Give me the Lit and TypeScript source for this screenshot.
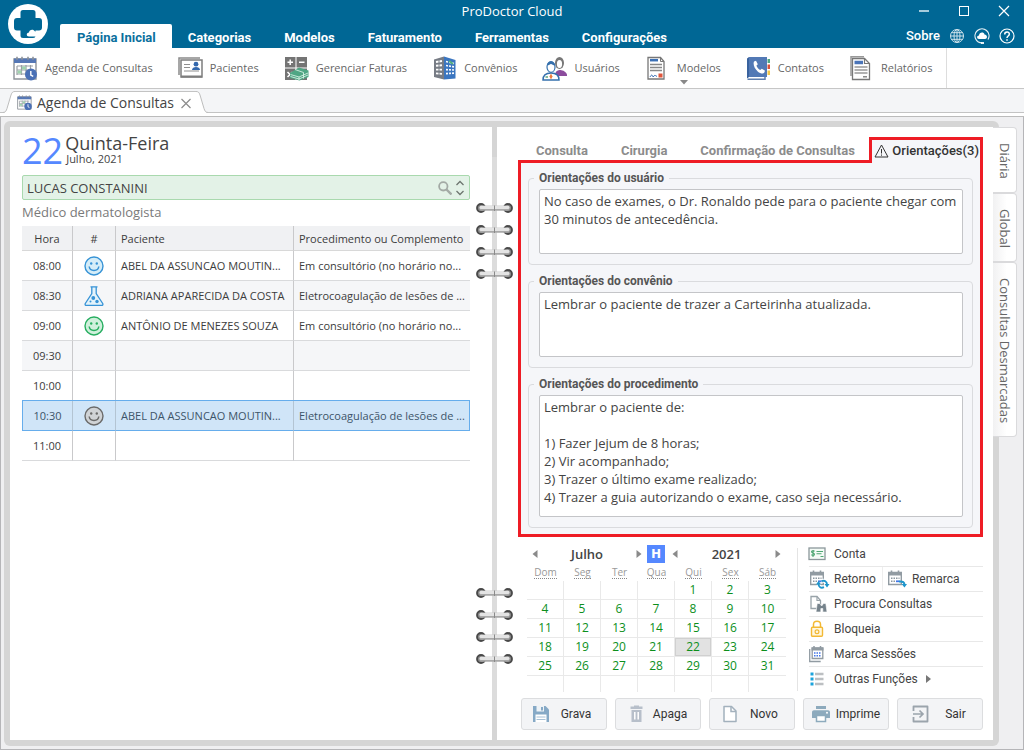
import { LitElement, html, css, svg, nothing, TemplateResult } from "lit";
import { customElement, state } from "lit/decorators.js";
import { classMap } from "lit/directives/class-map.js";

const gridIcon = (c: string) => svg`
  <path d="M1 3h22v20H1z" fill="#fff" stroke="${c}" stroke-width="1.4"/>
  <path d="M1 2.500h22v4.500H1z" fill="#5577b5"/>
  <path d="M4 .8v3M9 .8v3M15 .8v3M20 .8v3" stroke="#8d9299" stroke-width="1.600"/>
  <path d="M4 10h16M4 14h16M4 18h10M4 10v9M8.500 9v10M13 9v10M17.500 9v6" stroke="#9a9fa5" stroke-width="1.200"/>`;

const clock = svg`
  <circle cx="18" cy="18.500" r="6" fill="#4a70b5"/>
  <path d="M17.800 15v4l2.400 1.400" fill="none" stroke="#fff" stroke-width="1.400"/>`;

const ribbonIcons: Record<string, TemplateResult> = {
  agenda: svg`${gridIcon("#8d9299")}<path d="M9 10.500h4v3H9zM4.500 14.500h4v3h-4z" fill="#9fd4ae"/>${clock}`,
  pacientes: svg`
    <path d="M1 19V2h21" fill="none" stroke="#8a8a8a" stroke-width="1.500"/>
    <rect x="3" y="4" width="21" height="17" fill="#fff" stroke="#7d7d7d" stroke-width="1.500"/>
    <path d="M3 20.500h21" stroke="#7d7d7d" stroke-width="2"/>
    <path d="M6 8.500h6M6 11.500h6M6 15h15" stroke="#8f8f8f" stroke-width="1.200"/>
    <circle cx="18" cy="8.200" r="2.400" fill="#3468ad"/><path d="M14 14c0-4 8-4 8 0z" fill="#3468ad"/>`,
  faturas: svg`
    <path d="M1 1h10.500v10.500H1zM12.500 1H23v10.500H12.500zM1 12.500h10.500V24H1zM12.500 12.500H23V24H12.500z" fill="#747474"/>
    <path d="M3.500 6.200H9M6.200 3.500V9M15 6.200h5.500M3.500 16l5 5M8.500 16l-5 5" stroke="#fff" stroke-width="1.500"/>
    <path d="M6 17l9-5.500 9.500 3V21l-9 3.500L6 22z" fill="#4fa684"/>
    <path d="M6.500 18.500l8.500 2.500 9-4M6.500 20.500l8.500 2.500 9-4M15 21v3M11 13.500l8.500 3v6" fill="none" stroke="#d5efe3" stroke-width=".9"/>`,
  convenios: svg`
    <path d="M2 3.500L12 .5v23L2 21z" fill="#777c85"/><path d="M12 .5L23.500 4v18.500L12 23.500z" fill="#3b76c0"/>
    <path d="M4 6l6-1M4 9.800l6-.6M4 13.600h6M4 17.400l6 .5" stroke="#fff" stroke-width="1.900"/>
    <path d="M7 4v15" stroke="#777c85" stroke-width="1"/>
    <path d="M14 5.500l8 2M14 9.500l8 1.300M14 13.600l8 .4M14 17.700l8-.6" stroke="#fff" stroke-width="1.700"/>
    <path d="M16.500 3v19M19.500 4v18" stroke="#3b76c0" stroke-width="1.100"/>
    <path d="M17 5l4 3" stroke="#55b07f" stroke-width="2"/>`,
  usuarios: svg`
    <path d="M12.500 20c.5-4 2.500-6 5-6s7 1 8 6z" fill="#8c4c9d"/>
    <ellipse cx="17.500" cy="7" rx="4.500" ry="6" fill="#777"/><ellipse cx="17.500" cy="8" rx="2.600" ry="4" fill="#fff"/>
    <path d="M1 24c0-5 3-7 8-7s8 2 8 7z" fill="#fff" stroke="#3570ad" stroke-width="1.500"/>
    <ellipse cx="9" cy="11" rx="4" ry="5.300" fill="#fff" stroke="#3570ad" stroke-width="1.200"/>
    <path d="M5 9.500C5 4 13 4 13 9.500c-2 0-3-1.500-4-1.500s-2 1.500-4 1.500z" fill="#3570ad"/>
    <path d="M9 17.500l1.500 3L9 23.500l-1.500-3z" fill="#ee7b3a"/><path d="M3.500 21h2.500" stroke="#5ba782" stroke-width="1.500"/>`,
  modelos: svg`
    <path d="M3 1.500h12.500l3.500 4V23H3z" fill="#fff" stroke="#777" stroke-width="1.300"/><path d="M15.500 1.500v4H19" fill="none" stroke="#777"/>
    <path d="M5 4.200h8" stroke="#3b70b5" stroke-width="2.500"/>
    <path d="M5 8.500h12M5 11.500h12M5 14.500h12" stroke="#888" stroke-width="1.300"/>
    <path d="M5 21c1.500-3 2.500-2 3 0 1.500-2 2-2 4-.5" fill="none" stroke="#3b70b5"/>
    <rect x="13.500" y="17.500" width="4" height="4" fill="#e0563c"/>`,
  contatos: svg`
    <path d="M3 1h18v20H3z" fill="#5279b5"/><path d="M3 1L1 2.500V22.500L3 21" fill="#39629e"/>
    <path d="M1.500 23.300H19V21" fill="none" stroke="#5f7fae" stroke-width="1.500"/>
    <path d="M21.500 3H24v4h-2.500z" fill="#4fa684"/><path d="M21.500 8.500H24v4.500h-2.500z" fill="#d8523a"/><path d="M21.500 14.500H24V19h-2.500z" fill="#f3c648"/>
    <path d="M8 5.500l2-.8 1.800 3.600-1.400 1.500c.8 2 2 3.300 3.800 4.200l1.600-1.300 3.200 2-.8 2c-1 1.300-3.700 1-6.500-1.300C8.500 12.800 6.800 8.500 8 5.500z" fill="#fff"/>`,
  relatorios: svg`
    <path d="M2 20V.7h13" fill="none" stroke="#999" stroke-width="1.500"/>
    <path d="M3.500 2.500h12l5 5v16h-17z" fill="#fff" stroke="#777" stroke-width="1.300"/><path d="M15.500 2.500v5h5" fill="none" stroke="#777" stroke-width="1.200"/>
    <path d="M5.500 6.500h8.500" stroke="#4a74b8" stroke-width="3.500"/>
    <path d="M5.500 11h13M5.500 14h13M5.500 17h13" stroke="#999" stroke-width="1.300"/><path d="M14 20.800h4" stroke="#777" stroke-width="1.300"/>`,
};

const smallCalendar = svg`
  <path d="M1.700 2.500h12.600v12H1.700z" fill="#fff" stroke="#919ba2" stroke-width="1.400"/>
  <path d="M1 2h14v3.500H1z" fill="#919ba2"/><path d="M4.500 .5v2M11.500 .5v2" stroke="#919ba2" stroke-width="1.600"/>
  <path d="M4 8.300h8.500M4 11.300h5" stroke="#8c98a0" stroke-width="1.500" stroke-dasharray="1.500 1"/>
  <path d="M9 11.300h3.500" stroke="#4176e8" stroke-width="1.800"/>`;

const actionIcons: Record<string, TemplateResult> = {
  conta: svg`
    <rect x="0" y="3" width="16" height="11.500" fill="#f4fbf6" stroke="#8c979b" stroke-width="1.300"/>
    <path d="M5.500 6.300c-1-1-3-.8-3 .5s3 1.100 3 2.500-2.200 1.500-3.100.4M4 5v7M7.500 6.500h6.500M7.500 8.700h5M11.500 11.500h3" fill="none" stroke="#4fa774" stroke-width="1.100"/>`,
  retorno: svg`${smallCalendar}
    <path d="M9.500 14.500c.2 2.500 2.500 3.800 5 2.800M17.800 14c-.1-2.500-2.200-3.800-4.600-3" fill="none" stroke="#fff" stroke-width="4"/>
    <path d="M9.500 14c0 3 2.500 4.500 5.500 3.200M18 14.500c0-3-2.500-4.500-5.500-3.300" fill="none" stroke="#1e95cb" stroke-width="1.900"/>
    <path d="M7 14.500h5L9.500 11zM15.500 14h5L18 17.500z" fill="#1e95cb"/>`,
  remarca: svg`${smallCalendar}
    <path d="M12 11.500c4-.5 5.500 1 5.500 3.500" fill="none" stroke="#1e95cb" stroke-width="2"/><path d="M14.500 14h5.500l-2.500 3.500z" fill="#1e95cb"/>`,
  procura: svg`
    <path d="M2 1.500h6l3.500 4V13.500H2z" fill="#fff" stroke="#99a3a9" stroke-width="1.300"/><path d="M8 1.500v4h3.500" fill="none" stroke="#99a3a9" stroke-width="1.200"/>
    <path d="M8.200 8.500h2.600l1.200 2h1.200l1.200-2h2.400L18 17h-4.200v-3.500h-2V17H7z" fill="#75828b" stroke="#fff" stroke-width=".6"/>`,
  bloqueia: svg`
    <path d="M4.500 7.500V4.500c0-4.200 7-4.200 7 0v3" fill="none" stroke="#f3b934" stroke-width="1.500"/>
    <rect x="2.500" y="7.300" width="11" height="9" rx="1" fill="#fff7df" stroke="#f3b934" stroke-width="1.400"/><circle cx="8" cy="11.800" r="1.900" fill="none" stroke="#f3b934" stroke-width="1.200"/>`,
  marca: svg`
    <path d="M.7 4v12.500h11" fill="none" stroke="#919ba2" stroke-width="1.300"/>
    <path d="M3.200 3h10.600v10.500H3.200z" fill="#fff" stroke="#919ba2" stroke-width="1.300"/>
    <path d="M2.500 2.500h12v3h-12z" fill="#919ba2"/><path d="M5 1v2M11.500 1v2" stroke="#919ba2" stroke-width="1.500"/>
    <path d="M5 8h7.500M5 10.800h7.500" stroke="#4176e8" stroke-width="1.500" stroke-dasharray="1.500 1"/>`,
  outras: svg`
    <path d="M1.500 4h3M1.500 9h3M1.500 14h3" stroke="#1ca3dc" stroke-width="2.800"/><path d="M6 4h8.500M6 9h8.500M6 14h8.500" stroke="#bcbfc2" stroke-width="2.400"/>`,
};

const footerIcons: Record<string, TemplateResult> = {
  grava: svg`
    <path d="M2 2h12.500L18 5.500V18H2z" fill="#86a9c6"/><path d="M5.500 2h7.500v5.500H5.500z" fill="#eef3f7"/><path d="M10 3h2v3.500h-2z" fill="#86a9c6"/>
    <path d="M4.500 10.500h11V18h-11z" fill="#fff"/><path d="M5.500 13h9M5.500 15.500h9" stroke="#a7c0d5"/>`,
  apaga: svg`
    <path d="M6.500 6h10v12h-10z" fill="#b7bfca"/><path d="M5.500 2.500h12v2.400h-12zM9 1.500h5v2H9z" fill="#b7bfca"/><path d="M9.800 8v7.500M13.200 8v7.500" stroke="#fff" stroke-width="1.500"/>`,
  novo: svg`
    <path d="M5 2.500h7.500L17 7v10.500H5z" fill="#fff" stroke="#a3b1bd" stroke-width="1.500" stroke-linejoin="round"/><path d="M12 2.500V7.500h5" fill="none" stroke="#a3b1bd" stroke-width="1.500"/>`,
  imprime: svg`
    <path d="M3 2h10v3H3z" fill="#8daabd"/><path d="M-1 8.500c0-1.500.8-2.300 2-2.300h14c1.200 0 2 .8 2 2.300V14H-1z" fill="#8daabd"/>
    <path d="M3.500 11.500h9v6h-9z" fill="#fff" stroke="#8daabd" stroke-width="1.500"/><circle cx="14" cy="8.800" r="1" fill="#fff"/>`,
  sair: svg`
    <path d="M6.500 7V2.500h14v15h-14V13" fill="none" stroke="#9ba4ac" stroke-width="1.800" stroke-linejoin="round"/>
    <path d="M6 10h10M12.500 6.500l3.500 3.500-3.500 3.500" fill="none" stroke="#9ba4ac" stroke-width="1.700"/>`,
};

const smiley = (line: string, fill: string) => svg`
  <circle cx="10" cy="10" r="9" fill="${fill}" stroke="${line}" stroke-width="1.400"/>
  <circle cx="7.200" cy="7.500" r="1.200" fill="${line}"/><circle cx="12.800" cy="7.500" r="1.200" fill="${line}"/>
  <path d="M5.200 10.500c.6 5.200 9 5.200 9.600 0" fill="none" stroke="${line}" stroke-width="1.500"/>`;

const statusIcons: Record<string, TemplateResult> = {
  blue: smiley("#3793d6", "#d5edf8"),
  green: smiley("#27ae60", "#d0f0dc"),
  grey: smiley("#6a6a6a", "#d0d3d6"),
  flask: svg`
    <path d="M6.500 .8h7M7.800 1v6.500L1.300 17.500c-.5 1 0 2 1 2h15.400c1 0 1.500-1 1-2L12.200 7.500V1" fill="#e3f3fb" stroke="#3793d6" stroke-width="1.300"/>
    <circle cx="9.300" cy="12" r="1.900" fill="#3793d6"/><circle cx="13" cy="15.500" r="1.700" fill="#3793d6"/><circle cx="6.500" cy="15.500" r="1" fill="#3793d6"/>`,
};

interface Slot { time: string; icon?: string; patient?: string; procedure?: string; selected?: boolean; }

const slots: Slot[] = [
  { time: "08:00", icon: "blue", patient: "ABEL DA ASSUNCAO MOUTIN...", procedure: "Em consultório (no horário no..." },
  { time: "08:30", icon: "flask", patient: "ADRIANA APARECIDA DA COSTA", procedure: "Eletrocoagulação de lesões de ..." },
  { time: "09:00", icon: "green", patient: "ANTÔNIO DE MENEZES SOUZA", procedure: "Em consultório (no horário no..." },
  { time: "09:30" },
  { time: "10:00" },
  { time: "10:30", icon: "grey", patient: "ABEL DA ASSUNCAO MOUTIN...", procedure: "Eletrocoagulação de lesões de ...", selected: true },
  { time: "11:00" },
];

const guidance = [
  { id: "user", title: "Orientações do usuário", tall: false,
    text: "No caso de exames, o Dr. Ronaldo pede para o paciente chegar com 30 minutos de antecedência." },
  { id: "plan", title: "Orientações do convênio", tall: false,
    text: "Lembrar o paciente de trazer a Carteirinha atualizada." },
  { id: "proc", title: "Orientações do procedimento", tall: true,
    text: "Lembrar o paciente de:\n\n1) Fazer Jejum de 8 horas;\n2) Vir acompanhado;\n3) Trazer o último exame realizado;\n4) Trazer a guia autorizando o exame, caso seja necessário." },
];

const reset = css`
  :host, *, *::before, *::after { box-sizing: border-box; }
  button, select, textarea { font: inherit; color: inherit; margin: 0; }
  button { border: 0; background: none; padding: 0; cursor: pointer; }
  svg { display: block; flex: none; }
`;

@customElement("app-header")
class AppHeader extends LitElement {
  static styles = [reset, css`
    :host { display: block; font-family: "Open Sans", sans-serif; }
    .bar { display: grid; grid-template-columns: 60px 1fr auto; grid-template-rows: 24px 24px; background: #006795; color: #fff; }
    .logo { grid-column: 1; grid-row: 1 / 3; margin: 4px 0 0 8px; }
    .title { grid-column: 1 / 4; grid-row: 1; justify-self: center; font-size: 13px; line-height: 22px; }
    .window { grid-column: 3; grid-row: 1; display: flex; align-items: center; justify-content: flex-end; gap: 24px; padding-right: 12px; }
    .menu { grid-column: 2; grid-row: 2; display: flex; }
    .menu-item { padding: 3px 17px 0 16px; font: 700 13px/21px Roboto, sans-serif; color: #fff; }
    .menu-item.on { padding: 3px 16px 0 17px; background: #fff; color: #0a6f9d; border-radius: 2px 2px 0 0; }
    .help { grid-column: 3; grid-row: 2; display: flex; align-items: center; gap: 9px; padding-right: 9px; }
    .about { font: 500 13px/24px Roboto, sans-serif; color: #fff; text-decoration: none; }
    .ribbon { display: flex; height: 41px; background: #fff; border-bottom: 1px solid #c6c6c6; }
    .tools { display: flex; gap: 24px; padding: 0 14px 0 12px; border-right: 1px solid #ddd; }
    .tool { position: relative; display: flex; align-items: center; gap: 7px; font-size: 11px; color: #666; }
    .caption { padding-bottom: 2px; }
    .more { position: absolute; left: 36px; bottom: 3px; }
  `];
  private menu = ["Página Inicial", "Categorias", "Modelos", "Faturamento", "Ferramentas", "Configurações"];
  private tools = [
    ["agenda", "Agenda de Consultas"], ["pacientes", "Pacientes"], ["faturas", "Gerenciar Faturas"], ["convenios", "Convênios"],
    ["usuarios", "Usuários"], ["modelos", "Modelos"], ["contatos", "Contatos"], ["relatorios", "Relatórios"],
  ];
  render() {
    return html`
      <header class="bar">
        <svg class="logo" width="40" height="40" viewBox="0 0 40 40" aria-hidden="true">
          <circle cx="20" cy="20" r="20" fill="#fff"/>
          <path d="M15 6h10q2.500 0 2.500 2.500V14H31q3 0 3 3v6.500q0 3-3 3H27.500V31.500Q27.500 34 25 34H15q-2.500 0-2.500-2.500v-5H9q-3 0-3-3V17q0-3 3-3h3.500V8.500Q12.500 6 15 6z" fill="#006795"/>
          <path d="M21 32.500c-3 0-3-4 0-4 0-3 4.500-4 6-1 2-.5 3 1 3 2.200 2.500.3 2.500 2.800 0 2.800z" fill="#fff"/>
        </svg>
        <div class="title">ProDoctor Cloud</div>
        <div class="window">
          <button aria-label="Minimizar"><svg width="16" height="16" viewBox="0 0 16 16"><path d="M3 7h10" stroke="#a5cbdc" stroke-width="2"/></svg></button>
          <button aria-label="Maximizar"><svg width="16" height="16" viewBox="0 0 16 16"><rect x="3.500" y="2.500" width="9" height="9" fill="none" stroke="#fff"/></svg></button>
          <button aria-label="Fechar"><svg width="16" height="16" viewBox="0 0 16 16"><path d="M3 2l10 10M13 2L3 12" stroke="#fff" stroke-width="1.200"/></svg></button>
        </div>
        <nav class="menu">
          ${this.menu.map((m, i) => html`<button class=${classMap({ "menu-item": true, on: i === 0 })}>${m}</button>`)}
        </nav>
        <div class="help">
          <a class="about" href="#sobre">Sobre</a>
          <button aria-label="Idioma"><svg width="16" height="16" viewBox="0 0 16 16" fill="none" stroke="#cfe3ec">
            <circle cx="8" cy="8" r="6.500"/><ellipse cx="8" cy="8" rx="3" ry="6.500"/><path d="M8 1.500v13M1.500 8h13M2.500 4.700h11M2.500 11.300h11"/></svg></button>
          <button aria-label="Suporte"><svg width="16" height="16" viewBox="0 0 16 16">
            <path d="M2 11.500A7 7 0 1 1 14 11.500M2 11.500c1 2 3 3.300 6 3.300" fill="none" stroke="#e6f1f6" stroke-width="1.200"/>
            <path d="M5 11c-2.500 0-2.500-3.500 0-3.500C5 4 10 3.500 10.500 6.500c3 0 3.500 4.500.5 4.500z" fill="#fff"/><path d="M7 15h3" stroke="#fff" stroke-width="1.800"/></svg></button>
          <button aria-label="Ajuda"><svg width="16" height="16" viewBox="0 0 16 16" fill="none" stroke="#fff">
            <circle cx="8" cy="8" r="7" stroke-width="1.200"/><path d="M5.700 6.500C5.700 3 10.500 3.300 10.300 6.200 10.200 8 8 8 8 10M8 11.200v1.600" stroke-width="1.500"/></svg></button>
        </div>
      </header>
      <div class="ribbon">
        <div class="tools">
          ${this.tools.map(([icon, label]) => html`
            <button class="tool">
              <svg width="26" height="26" viewBox="-1 -1 26 26" aria-hidden="true">${ribbonIcons[icon]}</svg><span class="caption">${label}</span>
              ${icon === "modelos" ? html`<svg class="more" width="8" height="5" viewBox="0 0 8 5"><path d="M0 0h8L4 4.500z" fill="#888"/></svg>` : nothing}
            </button>`)}
        </div>
      </div>`;
  }
}

@customElement("document-tabs")
class DocumentTabs extends LitElement {
  static styles = [reset, css`
    :host { display: block; font-family: "Open Sans", sans-serif; }
    .strip { display: flex; height: 24px; padding: 2px 0 0 3px; background: #f4f5f7; border-bottom: 1px solid #c3c3c3; }
    .tab { display: flex; height: 22px; }
    .label { display: flex; align-items: center; gap: 4px; padding: 0 2px; background: #fff; border-top: 1px solid #c3c3c3; font-size: 14px; line-height: 20px; color: #444; }
    .rule { height: 4px; background: #fff; border-bottom: 1px solid #bbb; }
  `];
  render() {
    return html`
      <div class="strip">
        <div class="tab">
          <svg width="12" height="22" viewBox="0 0 12 22"><path d="M0 22C3 21.500 3 20 4 17.500L8 4C9 1 10 .5 12 .5V22z" fill="#fff"/><path d="M0 21.500C3 21 3 20 4 17.500L8 4C9 1 10 .5 12 .5" fill="none" stroke="#bdbdbd"/></svg>
          <div class="label">
            <svg width="16" height="16" viewBox="0 0 26 26">${ribbonIcons.agenda}</svg>
            <span>Agenda de Consultas</span>
            <button aria-label="Fechar aba"><svg width="16" height="16" viewBox="0 0 16 16"><path d="M3.500 4l9 9M12.500 4l-9 9" stroke="#8c8c8c" stroke-width="1.200"/></svg></button>
          </div>
          <svg width="12" height="22" viewBox="0 0 12 22"><path d="M12 22C9 21.500 9 20 8 17.500L4 4C3 1 2 .5 0 .5V22z" fill="#fff"/><path d="M12 21.500C9 21 9 20 8 17.500L4 4C3 1 2 .5 0 .5" fill="none" stroke="#bdbdbd"/></svg>
        </div>
      </div>
      <div class="rule"></div>`;
  }
}

@customElement("day-page")
class DayPage extends LitElement {
  static styles = [reset, css`
    :host { display: block; padding: 6px 22px 0 12px; background: #fff; font-family: "Open Sans", sans-serif; color: #444; }
    .date { display: flex; gap: 2px; height: 42px; }
    .day { font-size: 36px; line-height: 36px; color: #5588ff; }
    .weekday { font-size: 18px; line-height: 20px; }
    .month { font-size: 11px; line-height: 12px; padding-left: 1px; }
    .doctor { display: flex; align-items: center; height: 25px; padding-right: 4px; background: #e3f2e7; border: 1px solid #a9d9ae; border-radius: 2px; }
    .name { flex: 1; min-width: 0; height: 23px; padding: 0 4px; border: 0; background: none; appearance: none; font-size: 13px; outline: 0; }
    .search { margin-right: 3px; }
    .specialty { font-size: 13px; line-height: 18px; padding: 3px 0; color: #7a7a7a; height: 26px; }
    .agenda { width: 100%; table-layout: fixed; border-collapse: separate; border-spacing: 0; font-size: 11px; color: #3c3c3c; }
    .c-time { width: 51px; }
    .c-icon { width: 43px; }
    .c-patient { width: 178px; }
    .head { height: 25px; padding: 0 5px; background: #f0f1f3; font-weight: 400; text-align: left; border-right: 1px solid #c9c9cb; border-bottom: 1px solid #d8d8d8; white-space: nowrap; }
    .cell { height: 30px; padding: 0 0 0 5px; border-right: 1px solid #c9c9cb; border-bottom: 1px solid #d9dadc; white-space: nowrap; overflow: hidden; text-overflow: ellipsis; }
    .head:last-child, .cell:last-child { border-right: 0; }
    .mid { text-align: center; padding: 0; }
    .mid svg { margin: 0 auto; }
    .row:nth-child(even) .cell { background: #f5f6f8; }
    .row.selected .cell { background: #d0e5f8; border-bottom-color: #66adec; box-shadow: 0 -1px #66adec; color: #3d5468; border-right-color: #b3c4d3; }
    .row.selected .cell:first-child { border-left: 1px solid #66adec; }
    .row.selected .cell:last-child { border-right: 1px solid #66adec; }
  `];
  render() {
    return html`
      <div class="date">
        <div class="day">22</div>
        <div><div class="weekday">Quinta-Feira</div><div class="month">Julho, 2021</div></div>
      </div>
      <div class="doctor">
        <select class="name" aria-label="Médico"><option>LUCAS CONSTANINI</option></select>
        <button class="search" aria-label="Pesquisar"><svg width="14" height="14" viewBox="0 0 14 14" fill="none" stroke="#a3aaa5"><circle cx="5.300" cy="5.300" r="4.200" stroke-width="1.800"/><path d="M8.500 8.500l5 5" stroke-width="2.400"/></svg></button>
        <svg width="10" height="16" viewBox="0 0 10 16" fill="none" stroke="#6d756f" stroke-width="1.300"><path d="M1.500 5L5 1.500 8.500 5M1.500 11L5 14.500 8.500 11"/></svg>
      </div>
      <div class="specialty">Médico dermatologista</div>
      <table class="agenda">
        <colgroup><col class="c-time"><col class="c-icon"><col class="c-patient"><col></colgroup>
        <thead><tr><th class="head mid">Hora</th><th class="head mid">#</th><th class="head">Paciente</th><th class="head">Procedimento ou Complemento</th></tr></thead>
        <tbody>
          ${slots.map(s => html`
            <tr class=${classMap({ row: true, selected: !!s.selected })}>
              <td class="cell mid">${s.time}</td>
              <td class="cell mid">${s.icon ? html`<svg width="20" height="20" viewBox="0 0 20 20">${statusIcons[s.icon]}</svg>` : nothing}</td>
              <td class="cell">${s.patient ?? nothing}</td>
              <td class="cell">${s.procedure ?? nothing}</td>
            </tr>`)}
        </tbody>
      </table>`;
  }
}

@customElement("month-calendar")
class MonthCalendar extends LitElement {
  static styles = [reset, css`
    :host { display: block; width: 259px; font-family: "Open Sans", sans-serif; }
    .top { display: grid; grid-template-columns: 120px 20px 119px; align-items: center; height: 24px; }
    .picker { display: flex; align-items: center; justify-content: space-between; padding: 0 5px; font-size: 13px; font-weight: 600; color: #444; }
    .today { width: 18px; height: 18px; background: #5588ff; color: #fff; font: 900 13px/18px Roboto, sans-serif; }
    .days { width: 100%; table-layout: fixed; border-collapse: separate; border-spacing: 0; text-align: center; }
    .wd { height: 15px; padding: 0; font-size: 10px; line-height: 13px; font-weight: 400; color: #999; vertical-align: top; }
    .abbr { border-bottom: 1px dotted #888; display: inline-block; line-height: 11px; }
    .day { height: 19px; padding: 0; border-right: 1px solid #e9e9e9; border-bottom: 1px solid #e9e9e9; }
    .day:last-child { border-right: 0; }
    .week:last-child .day { border-bottom: 0; height: 16px; }
    .pick { display: block; width: 100%; height: 18px; font-size: 12px; line-height: 18px; color: #0c8f1c; }
    .pick.on { background: #e2e2e2; box-shadow: inset 0 0 0 1px #d0d0d0; }
  `];
  private weekdays = ["Dom", "Seg", "Ter", "Qua", "Qui", "Sex", "Sáb"];
  @state() private selected = 22;
  private arrow(label: string, left: boolean) {
    return html`<button aria-label=${label}><svg width="6" height="8" viewBox="0 0 6 8"><path d=${left ? "M5.500 0v8L.5 4z" : "M.5 0v8L5.500 4z"} fill="#8a8a8a"/></svg></button>`;
  }
  render() {
    const firstColumn = 4;
    return html`
      <div class="top">
        <div class="picker">${this.arrow("Mês anterior", true)}<span>Julho</span>${this.arrow("Próximo mês", false)}</div>
        <button class="today" aria-label="Hoje">H</button>
        <div class="picker">${this.arrow("Ano anterior", true)}<span>2021</span>${this.arrow("Próximo ano", false)}</div>
      </div>
      <table class="days">
        <thead><tr>${this.weekdays.map(d => html`<th class="wd"><span class="abbr">${d}</span></th>`)}</tr></thead>
        <tbody>
          ${[0, 1, 2, 3, 4, 5].map(w => html`<tr class="week">
            ${[0, 1, 2, 3, 4, 5, 6].map(c => {
              const d = w * 7 + c - firstColumn + 1;
              return html`<td class="day">${d > 0 && d < 32
                ? html`<button class=${classMap({ pick: true, on: d === this.selected })} @click=${() => (this.selected = d)}>${d}</button>` : nothing}</td>`;
            })}
          </tr>`)}
        </tbody>
      </table>`;
  }
}

@customElement("guidance-page")
class GuidancePage extends LitElement {
  static styles = [reset, css`
    :host { display: block; padding: 10px 10px 10px 21px; background: #fff; font-family: "Open Sans", sans-serif; color: #444; }
    .tabs { display: flex; height: 23px; padding-left: 18px; font: 700 13px/20px Roboto, sans-serif; color: #8c8c8c; }
    .tab { display: flex; align-items: center; gap: 3px; height: 26px; padding-top: 2px; margin-right: 33px; white-space: nowrap; }
    .tab.wide { margin-right: auto; }
    .tab.on { position: relative; margin-right: 0; padding: 0 1px 2px 2px; font-weight: 500; color: #333; background: #f5f6f9; border: 3px solid #ee1c25; border-bottom: 0; }
    .panel { display: flex; flex-direction: column; gap: 8px; padding: 7px 7px 6px; border: 3px solid #ee1c25; background: #f5f6f9; }
    .group { min-width: 0; margin: 0; padding: 3px 9px 10px 10px; border: 1px solid #dadbde; border-radius: 4px; }
    .legend { padding: 0 5px; margin-left: -5px; font: 700 12px/16px Roboto, sans-serif; color: #555; }
    .text { display: block; width: 100%; height: 65px; padding: 2px 2px 2px 4px; border: 1px solid #c4c5c8; border-radius: 2px; background: #fff; resize: none; outline: 0; font-size: 13px; line-height: 18px; overflow: hidden; }
    .text.tall { height: 122px; }
    .lower { display: flex; gap: 11px; margin: 5px 0 6px 9px; }
    .list { flex: 1; }
    .divider { width: 1px; margin: 6px 0 1px; background: #e4e4e4; flex: none; }
    .line { display: flex; height: 25px; border-bottom: 1px solid #e8e8e8; }
    .line:last-child { border-bottom-color: transparent; }
    .action { display: flex; align-items: center; gap: 5px; font: 400 12px/24px Roboto, sans-serif; color: #444; }
    .action svg { overflow: visible; }
    .action + .action { border-left: 1px solid #eee; margin-left: 6px; padding-left: 4px; }
    .footer { display: grid; grid-template-columns: repeat(5, minmax(0, 1fr)); gap: 8px; margin-left: 3px; }
    .command { display: flex; align-items: center; gap: 2px; height: 32px; padding: 0 7px 0 9px; border: 1px solid #dcdddf; border-radius: 3px; background: #f3f4f6; font: 400 12px/30px Roboto, sans-serif; color: #333; }
    .command svg { overflow: visible; }
    .command:last-child { padding-right: 0; }
    .caption { flex: 1; text-align: center; }
  `];
  private action(icon: string, label: string) {
    return html`<button class="action"><svg width="20" height="18" viewBox="0 0 20 18" aria-hidden="true">${actionIcons[icon]}</svg>${label}
      ${icon === "outras" ? html`<svg width="10" height="8" viewBox="0 0 10 8"><path d="M3 0v8l5-4z" fill="#777"/></svg>` : nothing}</button>`;
  }
  render() {
    return html`
      <div class="tabs" role="tablist">
        <button class="tab" role="tab">Consulta</button>
        <button class="tab" role="tab">Cirurgia</button>
        <button class="tab wide" role="tab">Confirmação de Consultas</button>
        <button class="tab on" role="tab"><svg width="15" height="14" viewBox="0 0 15 14" fill="none" stroke="#333"><path d="M7.500 1L14 13H1z" stroke-linejoin="round"/><path d="M7.500 5v4.500M7.500 10.500v1.200"/></svg>Orientações(3)</button>
      </div>
      <div class="panel">
        ${guidance.map(g => html`
          <fieldset class="group">
            <legend class="legend"><label for=${g.id}>${g.title}</label></legend>
            <textarea id=${g.id} class=${classMap({ text: true, tall: g.tall })} spellcheck="false" .value=${g.text}></textarea>
          </fieldset>`)}
      </div>
      <div class="lower">
        <month-calendar></month-calendar>
        <div class="divider"></div>
        <div class="list">
          <div class="line">${this.action("conta", "Conta")}</div>
          <div class="line">${this.action("retorno", "Retorno")}${this.action("remarca", "Remarca")}</div>
          <div class="line">${this.action("procura", "Procura Consultas")}</div>
          <div class="line">${this.action("bloqueia", "Bloqueia")}</div>
          <div class="line">${this.action("marca", "Marca Sessões")}</div>
          <div class="line">${this.action("outras", "Outras Funções")}</div>
        </div>
      </div>
      <div class="footer">
        ${[["grava", "Grava"], ["apaga", "Apaga"], ["novo", "Novo"], ["imprime", "Imprime"], ["sair", "Sair"]].map(([icon, label]) => html`
          <button class="command"><svg width="20" height="20" viewBox="0 0 20 20" aria-hidden="true">${footerIcons[icon]}</svg><span class="caption">${label}</span></button>`)}
      </div>`;
  }
}

@customElement("app-root")
class AppRoot extends LitElement {
  static styles = [reset, css`
    :host { display: flex; flex-direction: column; min-height: 100vh; background: #efeff1; font-family: "Open Sans", sans-serif; }
    .workspace { flex: 1; display: flex; align-items: stretch; padding: 4px 6px 3px 3px; border: 1px solid #b5b5b8; border-top: 0; }
    .book { flex: 1; display: grid; grid-template-columns: minmax(0, 482fr) 5px minmax(0, 496fr); padding: 6px; background: #d5d5d5; border-radius: 6px; min-width: 0; }
    .spine { margin: 30px 0; background: #dcdcdc; position: relative; }
    .rings { position: absolute; left: -16px; display: grid; gap: 10px; z-index: 1; }
    .rings.upper { top: 45px; }
    .rings.lower { bottom: 45px; }
    .sides { display: flex; flex-direction: column; width: 24px; margin: 6px 0 0 -6px; }
    .side { display: flex; align-items: center; justify-content: center; width: 24px; padding: 15px 0 13px; writing-mode: vertical-rl; background: #fff; border: 1px solid #dadadc; border-left: 0; border-radius: 0 4px 4px 0; font-size: 13px; line-height: 22px; color: #666; }
    .side.off { background: linear-gradient(to right, #f1f1f2, #fff 60%); }
  `];
  private rings(place: string) {
    return html`<div class="rings ${place}">${[0, 1, 2, 3].map(() => html`
      <svg width="37" height="12" viewBox="0 0 37 12" aria-hidden="true">
        <circle cx="5" cy="6" r="4" fill="#888" stroke="#484848" stroke-width="1.800"/><circle cx="32" cy="6" r="4" fill="#888" stroke="#484848" stroke-width="1.800"/>
        <rect x="3.500" y="3.800" width="30" height="5" rx="2.400" fill="#a9a9a9"/><rect x="3.500" y="3.800" width="30" height="3.200" rx="1.600" fill="#e4e4e4"/>
        <path d="M18.500 3.500v5.500" stroke="#8a8a8a"/>
      </svg>`)}</div>`;
  }
  render() {
    return html`
      <app-header></app-header>
      <document-tabs></document-tabs>
      <main class="workspace">
        <div class="book">
          <day-page></day-page>
          <div class="spine">${this.rings("upper")}${this.rings("lower")}</div>
          <guidance-page></guidance-page>
        </div>
        <nav class="sides">
          <button class="side">Diária</button>
          <button class="side off">Global</button>
          <button class="side off">Consultas Desmarcadas</button>
        </nav>
      </main>`;
  }
}
